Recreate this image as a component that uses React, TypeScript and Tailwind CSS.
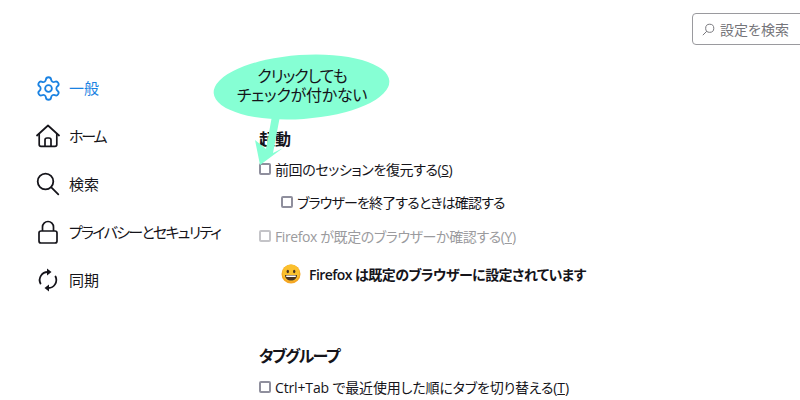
import { Settings } from "lucide-react";

const jp = "font-['Open_Sans','Noto_Sans_CJK_JP',sans-serif] [font-feature-settings:'palt']";

function Home() {
  return (
    <svg width="24" height="24" viewBox="0 0 24 24" fill="none" stroke="#15141a" strokeWidth="1.7" strokeLinejoin="round" strokeLinecap="round">
      <path d="M1 11.500 12 1.500l11 10" />
      <path d="M3.200 10v10.500a1.800 1.800 0 0 0 1.800 1.800h14a1.800 1.800 0 0 0 1.800-1.800V10" />
      <path d="M9 22v-6a2 2 0 0 1 2-2h2a2 2 0 0 1 2 2v6" />
    </svg>
  );
}

function Search() {
  return (
    <svg width="24" height="24" viewBox="0 0 24 24" fill="none" stroke="#15141a" strokeWidth="1.800" strokeLinecap="round">
      <circle cx="9.500" cy="9.500" r="7.800" />
      <path d="m15.300 15.300 7 7" />
    </svg>
  );
}

function Lock() {
  return (
    <svg width="24" height="24" viewBox="0 0 24 24" fill="none" stroke="#15141a" strokeWidth="1.700" strokeLinejoin="round">
      <rect x="3" y="11" width="18" height="12" rx="2" />
      <path d="M6.500 11V7a5.500 5.500 0 0 1 11 0v4" />
    </svg>
  );
}

function Sync() {
  return (
    <svg width="24" height="24" viewBox="0 0 24 24" fill="none" stroke="#15141a" strokeWidth="1.800" strokeLinecap="round">
      <path d="M4.500 15.500A8 8 0 0 1 12 4" />
      <path d="M19.500 8.500A8 8 0 0 1 12 20" />
      <path d="M11 0.500v7l4.500-3.500z" fill="#15141a" stroke="none" />
      <path d="M13 23.500v-7l-4.500 3.500z" fill="#15141a" stroke="none" />
    </svg>
  );
}

function NavItem({ icon, label, active, tracking }: { icon: React.ReactNode; label: string; active?: boolean; tracking?: string }) {
  return (
    <div className={"flex h-[48px] items-center gap-[9px] text-[15px] " + (active ? "text-[#1a82e2]" : "text-[#15141a]")}>
      <span className="flex w-[24px] justify-center">{icon}</span>
      <span className={"whitespace-nowrap " + (tracking ?? "")}>{label}</span>
    </div>
  );
}

function Check({ label, className, muted }: { label: React.ReactNode; className?: string; muted?: boolean }) {
  return (
    <div className={"flex items-center gap-[4px] text-[14px] whitespace-nowrap " + (muted ? "text-[#9b9b9e] " : "text-[#15141a] ") + (className ?? "")}>
      <span className={"h-[12px] w-[12px] rounded-[2px] border-2 " + (muted ? "border-[#c4c4c8]" : "border-[#8f8f9d]")} />
      <span>{label}</span>
    </div>
  );
}

function Callout() {
  return (
    <div className="absolute left-[210px] top-[50px] h-[120px] w-[184px]">
      <svg className="absolute inset-0" width="184" height="120" viewBox="0 0 184 120">
        <ellipse cx="91.500" cy="37" rx="88" ry="32" fill="#86ffd4" transform="rotate(-4 91.500 37)" />
        <path d="M62 66h8l-7 37 10-5-23 17-5-25 11 9z" fill="#86ffd4" />
      </svg>
      <div className="absolute left-0 top-[17px] w-[184px] text-center text-[16px] leading-[19px] text-[#15141a]">
        <div className="tracking-[-1px]">クリックしても</div>
        <div className="tracking-[-0.25px]">チェックが付かない</div>
      </div>
    </div>
  );
}

export default function App() {
  return (
    <div className={"relative h-[400px] w-[800px] overflow-hidden bg-white " + jp}>
      <div className="flex h-[58px] justify-end pt-[13px]">
        <div className="flex h-[32px] w-[120px] shrink-0 translate-x-[12px] items-center gap-[5px] rounded-[4px] border border-[#9a9a9e] pl-[9px] text-[14px] text-[#75757a]">
          <svg width="13" height="13" viewBox="0 0 16 16" fill="none" stroke="#75757a" strokeWidth="1.200">
            <circle cx="9.500" cy="6.500" r="5" />
            <path d="M6 10 1 15" />
          </svg>
          <span className="whitespace-nowrap">設定を検索</span>
        </div>
      </div>
      <div className="flex">
        <nav className="ml-[36px] flex w-[223px] shrink-0 flex-col pt-[6px]">
          <NavItem icon={<Settings size={27} strokeWidth={1.600} className="shrink-0" />} label="一般" active />
          <NavItem icon={<Home />} label="ホーム" tracking="tracking-[-2.2px]" />
          <NavItem icon={<Search />} label="検索" />
          <NavItem icon={<Lock />} label="プライバシーとセキュリティ" tracking="tracking-[-1.7px]" />
          <NavItem icon={<Sync />} label="同期" />
        </nav>
        <main className="flex flex-col pt-[70px]">
          <h2 className="text-[16px] leading-[22px] font-semibold text-[#15141a]">起動</h2>
          <Check className="mt-[8px] h-[22px] tracking-[-0.4px]" label={<>前回のセッションを復元する(<u>S</u>)</>} />
          <Check className="mt-[11px] ml-[22px] h-[22px] tracking-[-0.85px]" label="ブラウザーを終了するときは確認する" />
          <Check muted className="mt-[12px] h-[22px] tracking-[-0.4px]" label={<>Firefox が既定のブラウザーか確認する(<u>Y</u>)</>} />
          <div className="mt-[16px] ml-[22px] flex h-[22px] items-center gap-[8px] text-[14px] font-semibold tracking-[-0.55px] whitespace-nowrap text-[#15141a]">
            <svg width="20" height="20" viewBox="0 0 20 20">
              <circle cx="10" cy="10" r="9.500" fill="#f5a623" />
              <circle cx="10" cy="9" r="8.500" fill="#fbc02d" />
              <ellipse cx="6.800" cy="7.500" rx="1.200" ry="1.700" fill="#4a3320" />
              <ellipse cx="13.200" cy="7.500" rx="1.200" ry="1.700" fill="#4a3320" />
              <path d="M4 11h12c0 3.500-2.500 5.500-6 5.500S4 14.500 4 11z" fill="#4a3320" />
              <path d="M5.200 11.500h9.600v1.500H5.200z" fill="#fff" />
            </svg>
            <span>Firefox は既定のブラウザーに設定されています</span>
          </div>
          <h2 className="mt-[60px] text-[16px] leading-[22px] font-semibold tracking-[-1.6px] text-[#15141a]">タブグループ</h2>
          <Check className="mt-[9px] h-[22px] tracking-[-0.15px]" label={<>Ctrl+Tab で最近使用した順にタブを切り替える(<u>T</u>)</>} />
        </main>
      </div>
      <Callout />
    </div>
  );
}
